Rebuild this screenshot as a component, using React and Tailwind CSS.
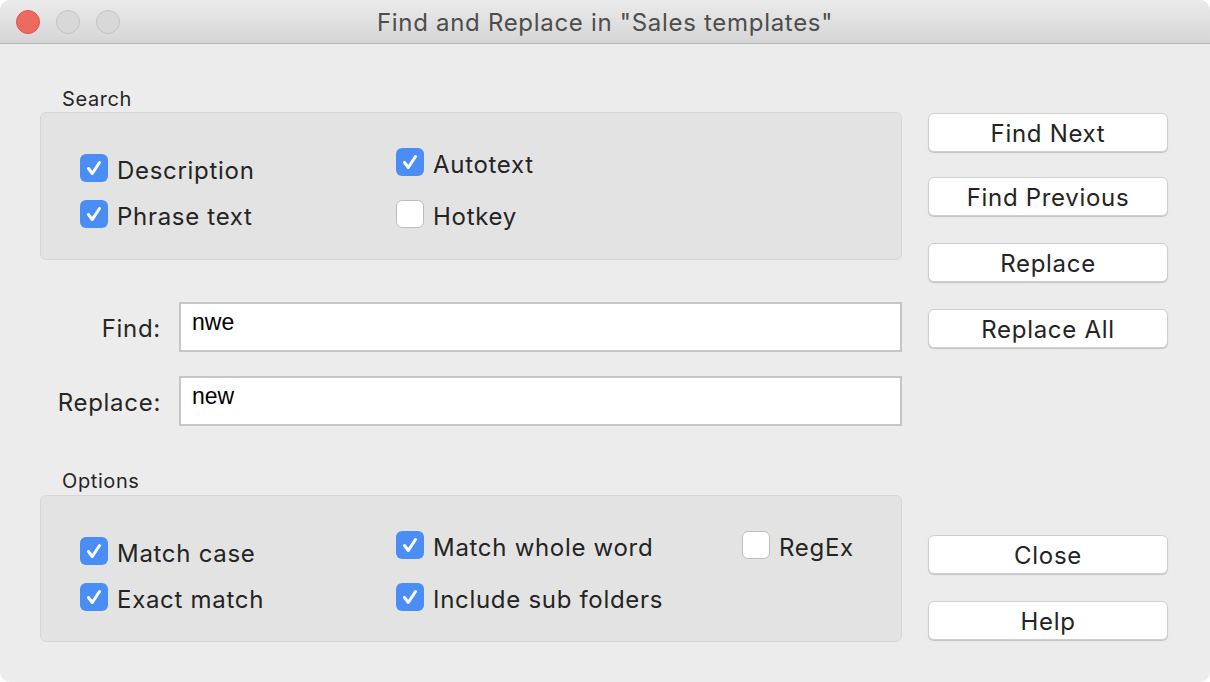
const FONT = { fontFamily: "Inter, 'Noto Sans', sans-serif" };

function Check({ on, label }) {
  return (
    <div className="flex items-center h-[28px] gap-[9px]">
      {on ? (
        <span className="w-[28px] h-[28px] rounded-[6px] bg-[#4a8ef5] flex items-center justify-center shrink-0">
          <svg width="28" height="28" viewBox="0 0 28 28">
            <path d="M8.5 14.5 L12.3 19.5 L19.5 8.5" fill="none" stroke="#fff" strokeWidth="3" strokeLinecap="round" strokeLinejoin="round" />
          </svg>
        </span>
      ) : (
        <span className="w-[28px] h-[28px] rounded-[6px] bg-white border border-[#bdbdbd] shrink-0" />
      )}
      <span className="pt-[5px] text-[24px] text-[#242424] leading-none tracking-[0.7px] whitespace-nowrap">{label}</span>
    </div>
  );
}

function Btn({ children, className = "" }) {
  return (
    <button className={"w-[240px] h-[39px] pt-[3px] rounded-[6px] bg-white border border-[#cfcfcf] shadow-[0_1px_1px_rgba(0,0,0,0.18)] text-[24px] text-[#242424] leading-none tracking-[0.7px] " + className}>
      {children}
    </button>
  );
}

function Field({ label, value }) {
  return (
    <div className="flex items-center">
      <span className="w-[121px] pt-[4px] text-right text-[24px] text-[#262626] leading-none tracking-[0.7px]">{label}</span>
      <div className="ml-[18px] flex-1 h-[50px] bg-white border-2 border-[#c6c6c6] pl-[11px] pt-[7px] text-[23px] leading-none text-black" style={{ fontFamily: "'Liberation Sans', Arial, sans-serif" }}>
        {value}
      </div>
    </div>
  );
}

export default function App() {
  return (
    <div className="w-[1210px] h-[682px] bg-white" style={FONT}>
      <div className="w-full h-full rounded-[10px] overflow-hidden bg-[#ececec] flex flex-col">
        {/* title bar */}
        <div className="h-[44px] shrink-0 flex items-center relative bg-gradient-to-b from-[#ebebeb] to-[#d5d5d5] border-b border-[#b5b5b5]">
          <div className="flex gap-[16px] pl-[16px]">
            <span className="w-[24px] h-[24px] rounded-full bg-[#ef6a5e] border border-[#dc5549]" />
            <span className="w-[24px] h-[24px] rounded-full bg-[#d8d8d8] border border-[#c2c2c2]" />
            <span className="w-[24px] h-[24px] rounded-full bg-[#d8d8d8] border border-[#c2c2c2]" />
          </div>
          <div className="absolute inset-0 pt-[2px] flex items-center justify-center text-[24px] text-[#4d4d4d] tracking-[0.7px] pointer-events-none">
            Find and Replace in "Sales templates"
          </div>
        </div>

        {/* body */}
        <div className="flex">
          <div className="w-[902px] pl-[40px]">
            <div className="pl-[22px] pt-[45px] h-[68px] text-[20px] text-[#262626] leading-none tracking-[0.6px]">Search</div>
            <div className="h-[148px] bg-[#e3e3e3] border border-[#d6d6d6] rounded-[6px] flex">
              <div className="w-[355px] pl-[39px] pt-[41px] flex flex-col gap-[18px]">
                <Check on label="Description" />
                <Check on label="Phrase text" />
              </div>
              <div className="pt-[35px] flex flex-col gap-[24px]">
                <Check on label="Autotext" />
                <Check label="Hotkey" />
              </div>
            </div>

            <div className="mt-[42px] flex flex-col gap-[24px]">
              <Field label="Find:" value="nwe" />
              <Field label="Replace:" value="new" />
            </div>

            <div className="pl-[22px] pt-[45px] h-[69px] text-[20px] text-[#262626] leading-none tracking-[0.6px]">Options</div>
            <div className="h-[147px] bg-[#e3e3e3] border border-[#d6d6d6] rounded-[6px] flex">
              <div className="w-[355px] pl-[39px] pt-[41px] flex flex-col gap-[18px]">
                <Check on label="Match case" />
                <Check on label="Exact match" />
              </div>
              <div className="w-[346px] pt-[35px] flex flex-col gap-[24px]">
                <Check on label="Match whole word" />
                <Check on label="Include sub folders" />
              </div>
              <div className="pt-[35px]">
                <Check label="RegEx" />
              </div>
            </div>
          </div>

          <div className="ml-[26px] pt-[69px] flex flex-col">
            <Btn>Find Next</Btn>
            <Btn className="mt-[25px]">Find Previous</Btn>
            <Btn className="mt-[27px]">Replace</Btn>
            <Btn className="mt-[27px]">Replace All</Btn>
            <Btn className="mt-[187px]">Close</Btn>
            <Btn className="mt-[27px]">Help</Btn>
          </div>
        </div>
      </div>
    </div>
  );
}
